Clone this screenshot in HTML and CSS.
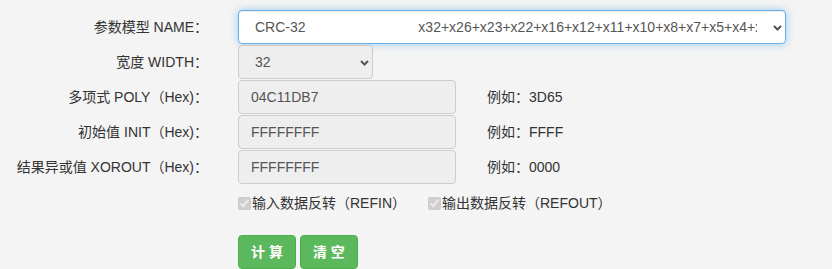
FILE: index.html
```html
<!DOCTYPE html>
<html lang="zh-CN">
<head>
<meta charset="utf-8">
<title>CRC</title>
<link rel="stylesheet" href="styles.css">
</head>
<body>
<form class="crc-form">
  <div class="row">
    <label class="lbl">参数模型 NAME：</label>
    <div class="select-wrap name-wrap">
      <select class="ctl sel sel-name focused">
        <option>CRC-32&nbsp;&nbsp;&nbsp;&nbsp;&nbsp;&nbsp;&nbsp;&nbsp;&nbsp;&nbsp;&nbsp;&nbsp;&nbsp;&nbsp;&nbsp;&nbsp;&nbsp;&nbsp;&nbsp;&nbsp;&nbsp;&nbsp;&nbsp;&nbsp;&nbsp;&nbsp;&nbsp;&nbsp;&nbsp;x32+x26+x23+x22+x16+x12+x11+x10+x8+x7+x5+x4+x2+x+1</option>
      </select>
      <svg class="chev" width="9" height="6" viewBox="0 0 9 6"><path d="M1 1 L4.5 4.5 L8 1" fill="none" stroke="#555" stroke-width="2"/></svg>
    </div>
  </div>
  <div class="row">
    <label class="lbl">宽度 WIDTH：</label>
    <div class="select-wrap width-wrap">
      <select class="ctl sel sel-width" disabled>
        <option>32</option>
      </select>
      <svg class="chev" width="9" height="6" viewBox="0 0 9 6"><path d="M1 1 L4.5 4.5 L8 1" fill="none" stroke="#555" stroke-width="2"/></svg>
    </div>
  </div>
  <div class="row">
    <label class="lbl">多项式 POLY（Hex)：</label>
    <input class="ctl inp" type="text" value="04C11DB7" disabled>
    <span class="eg">例如：3D65</span>
  </div>
  <div class="row">
    <label class="lbl">初始值 INIT（Hex)：</label>
    <input class="ctl inp" type="text" value="FFFFFFFF" disabled>
    <span class="eg">例如：FFFF</span>
  </div>
  <div class="row">
    <label class="lbl">结果异或值 XOROUT（Hex)：</label>
    <input class="ctl inp" type="text" value="FFFFFFFF" disabled>
    <span class="eg">例如：0000</span>
  </div>
  <div class="row checks">
    <span class="lbl"></span>
    <label class="chk"><input type="checkbox" checked disabled>输入数据反转（REFIN）</label>
    <label class="chk"><input type="checkbox" checked disabled>输出数据反转（REFOUT）</label>
  </div>
  <div class="row buttons">
    <span class="lbl"></span>
    <button type="button" class="btn">计 算</button>
    <button type="button" class="btn">清 空</button>
  </div>
</form>
</body>
</html>
```
FILE: styles.css
```css
html, body {
  margin: 0;
  padding: 0;
  background: #f4f4f4;
}
body {
  font-family: "Liberation Sans", "Noto Sans CJK SC", sans-serif;
  font-size: 14px;
  line-height: 20px;
  color: #333;
}
.crc-form {
  display: flex;
  flex-direction: column;
  gap: 1px;
  padding-top: 10px;
}
.row {
  display: flex;
  align-items: center;
  height: 34px;
}
.lbl {
  width: 208px;
  margin-right: 30px;
  text-align: right;
  flex: none;
  white-space: nowrap;
}
.ctl {
  box-sizing: border-box;
  height: 34px;
  font-family: inherit;
  font-size: 14px;
  line-height: 20px;
  color: #555;
  border: 1px solid #ccc;
  border-radius: 4px;
  background: #eee;
  padding: 6px 12px;
  margin: 0;
  opacity: 1;
}
.select-wrap {
  position: relative;
  flex: none;
}
.sel {
  -webkit-appearance: none;
  appearance: none;
  padding-left: 16px;
  padding-right: 28px;
  display: block;
  width: 100%;
}
.name-wrap { width: 548px; }
.width-wrap { width: 135px; }
.sel-name {
  background: #fff;
}
.sel-name.focused {
  border-color: #66afe9;
  outline: 0;
  box-shadow: inset 0 1px 1px rgba(0,0,0,.075), 0 0 8px rgba(102,175,233,.6);
}
.chev {
  position: absolute;
  right: 4px;
  top: 15px;
  pointer-events: none;
}
.inp {
  width: 218px;
  flex: none;
}
.eg {
  margin-left: 31px;
}
.checks {
  margin-top: 1px;
  height: 34px;
}
.chk {
  display: flex;
  align-items: center;
  color: #333;
}
.chk input {
  margin: 0 1px 0 0;
  width: 13px;
  height: 13px;
}
.chk + .chk {
  margin-left: 22px;
}
.buttons {
  margin-top: 14px;
  gap: 4px;
}
.buttons .lbl { margin-right: 26px; }
.btn {
  box-sizing: border-box;
  height: 34px;
  padding: 6px 12px;
  font-family: inherit;
  font-size: 14px;
  font-weight: bold;
  line-height: 20px;
  color: #fff;
  background: #5cb85c;
  border: 1px solid #4cae4c;
  border-radius: 4px;
}
```
